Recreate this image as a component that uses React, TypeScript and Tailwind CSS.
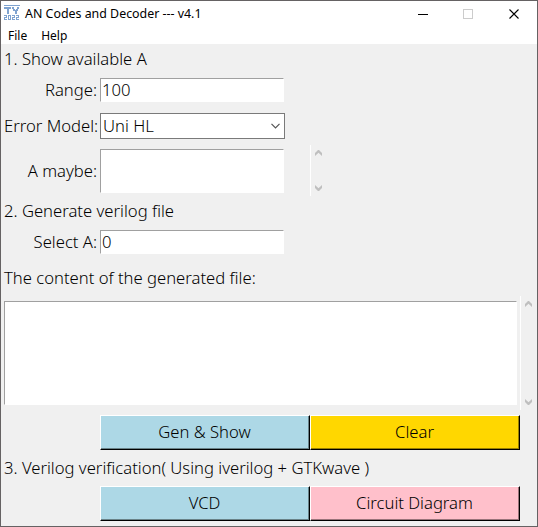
import type { ReactNode } from "react";

const sunken = "bg-white border border-t-[#a0a0a0] border-l-[#a0a0a0] border-r-white border-b-white";

function Chevron({ up = false }: { up?: boolean }) {
  return (
    <svg width="7" height="6" viewBox="0 0 7 6" className={`mr-px ${up ? "" : "rotate-180"}`} fill="#bfbfbf">
      <path d="M3 0H4L7 3V6L3.5 2.7L0 6V3Z" />
    </svg>
  );
}

function ScrollBar({ className }: { className: string }) {
  return (
    <div className={`flex w-[17px] flex-col items-center justify-between border-l border-white ${className}`}>
      <Chevron up />
      <Chevron />
    </div>
  );
}

function Label({ children, className = "" }: { children: ReactNode; className?: string }) {
  return <div className={`w-[96px] shrink-0 whitespace-nowrap pr-[3px] text-right ${className}`}>{children}</div>;
}

function Button({ children, className }: { children: ReactNode; className: string }) {
  return (
    <button className="h-[35px] w-[210px] border border-t-white border-l-white border-r-black border-b-black">
      <span className={`flex h-full items-center justify-center border-r border-b pb-px ${className}`}>{children}</span>
    </button>
  );
}

export default function App() {
  return (
    <div className="flex h-[527px] w-[538px] flex-col overflow-hidden border border-[#656263] bg-[#f0f0f0] font-['Noto_Sans','Open_Sans',sans-serif] text-[16.65px] font-light leading-[24px] text-black">
      <header className="h-[43px] shrink-0 bg-white text-[12px] font-normal">
        <div className="flex h-[25px] items-center">
          <svg width="16" height="16" viewBox="0 0 16 16" className="ml-[3px] mt-[4px] shrink-0 self-start" fill="#7fa3d0" shapeRendering="crispEdges">
            <path d="M0 0H16V1H0Z" />
            <path d="M0 2H7V4H4.500V9H2.500V4H0Z" />
            <path d="M8 2H10V4H11V5H12V4H13V2H15V4H14V6H13V9H11V6H9V4H8Z" />
            <g fill="none" stroke="#7fa3d0">
              <path d="M0 10.5H2.5V12.5H0.5V14.5H3M4.500 10.500H6.500V14.500H4.500ZM8 10.5H10.5V12.5H8.5V14.5H11M12 10.5H14.5V12.5H12.5V14.5H15" />
            </g>
          </svg>
          <div className="ml-[5px] whitespace-nowrap text-[12.4px]">AN Codes and Decoder --- v4.1</div>
          <svg width="108" height="12" viewBox="0 0 108 12" className="ml-auto mr-[13px]" fill="none">
            <path d="M2 6.5H12" stroke="#000" />
            <rect x="47.5" y="1.5" width="9" height="9" stroke="#ccc" />
            <path d="M93.5 1.5L102.5 10.5M102.5 1.5L93.5 10.5" stroke="#000" strokeWidth="1.1" />
          </svg>
        </div>
        <nav className="flex h-[18px] items-center gap-[14px] pl-[7px] pt-[2px]">
          <span>File</span>
          <span>Help</span>
        </nav>
      </header>

      <main className="flex flex-col pl-[3px]">
        <h2 className="mt-[3px] h-[24px]">1. Show available A</h2>
        <div className="mt-[7px] flex h-[24px] items-center">
          <Label>Range:</Label>
          <div className={`flex h-[24px] w-[184px] items-center pl-px ${sunken}`}>100</div>
        </div>
        <div className="mt-[11px] flex h-[26px] items-center">
          <Label>Error Model:</Label>
          <div className="flex h-[26px] w-[185px] items-center justify-between border border-[#7a7a7a] bg-white pl-[2px] pr-[4px]">
            <span>Uni HL</span>
            <svg width="9" height="6" viewBox="0 0 9 6" fill="none" stroke="#555" strokeWidth="1.2">
              <path d="M0.5 0.8L4.5 4.8L8.5 0.8" />
            </svg>
          </div>
        </div>
        <div className="mt-[6px] flex h-[51px] items-center">
          <Label>A maybe:</Label>
          <div className={`h-[44px] w-[184px] ${sunken}`} />
          <ScrollBar className="ml-[26px] h-[51px] py-[5px]" />
        </div>
        <h2 className="mt-[3px] h-[24px]">2. Generate verilog file</h2>
        <div className="mt-[7px] flex h-[24px] items-center">
          <Label>Select A:</Label>
          <div className={`flex h-[24px] w-[184px] items-center pl-px ${sunken}`}>0</div>
        </div>
        <h2 className="mt-[12px] h-[24px]">The content of the generated file:</h2>
        <div className="mt-[6px] flex h-[114px] items-center">
          <div className={`h-[104px] w-[513px] ${sunken}`} />
          <ScrollBar className="ml-[3px] h-[114px] py-[5px]" />
        </div>
        <div className="ml-[96px] mt-[5px] flex">
          <Button className="border-[#698288] bg-[#add8e6]">Gen &amp; Show</Button>
          <Button className="border-[#998100] bg-[#ffd700]">Clear</Button>
        </div>
        <h2 className="mt-[6px] h-[24px] whitespace-nowrap">3. Verilog verification( Using iverilog + GTKwave )</h2>
        <div className="ml-[96px] mt-[6px] flex">
          <Button className="border-[#698288] bg-[#add8e6]">VCD</Button>
          <Button className="border-[#99737a] bg-[#ffc0cb]">Circuit Diagram</Button>
        </div>
      </main>
    </div>
  );
}
